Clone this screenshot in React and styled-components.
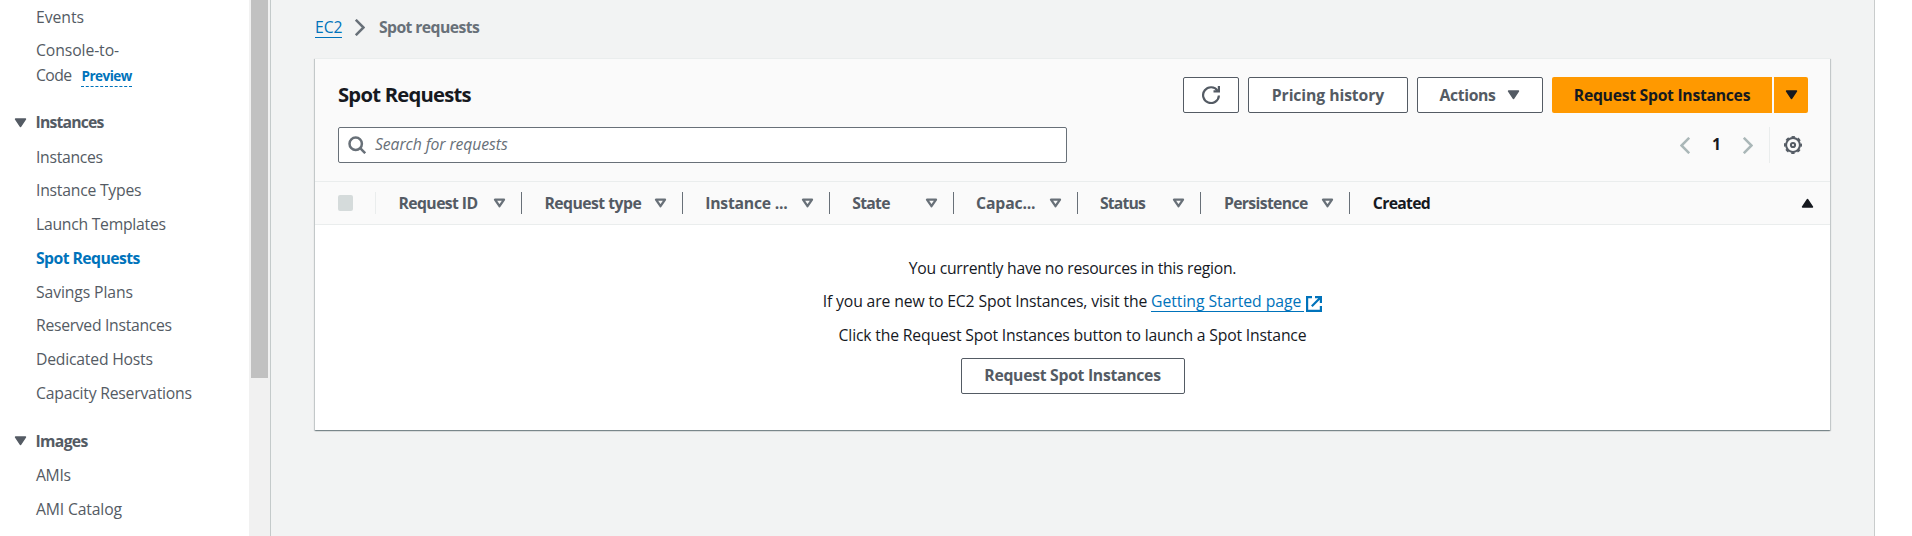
import React from 'react';
import styled, { createGlobalStyle } from 'styled-components';

const Global = createGlobalStyle`
  *, *::before, *::after { box-sizing: border-box; }
  html, body { margin: 0; background: #fff; }
  body { font-family: "Open Sans", "Noto Sans", sans-serif; font-size: 15.75px; line-height: 24.75px; color: #16191f; overflow: hidden; }
  svg { display: block; flex: none; }
`;

const Page = styled.div`
  display: flex;
  height: 536px;
  width: 1912px;
  overflow: hidden;
`;

/* ---------- sidebar ---------- */
const Sidebar = styled.aside`
  display: flex;
  width: 270px;
  flex: none;
`;
const Nav = styled.nav`
  width: 249px;
  padding: 4.5px 36px 0 36px;
  color: #545b64;
  overflow: hidden;
`;
const NavList = styled.ul`
  list-style: none;
  margin: 0 0 ${(p) => p.$gap || 0}px;
  padding: 0;
  display: flex;
  flex-direction: column;
  gap: 9px;
`;
const NavItem = styled.li`
  white-space: nowrap;
  letter-spacing: ${(p) => p.$ls || 0}px;
  ${(p) => p.$active && 'color: #0073bb; font-weight: 700;'}
`;
const NavHeading = styled.div`
  display: flex;
  align-items: center;
  gap: 9px;
  margin: 0 0 9.5px -22.5px;
  font-weight: 700;
  letter-spacing: ${(p) => p.$ls}px;
`;
const TightText = styled.span`
  letter-spacing: -0.6px;
`;
const Preview = styled.span`
  display: inline-block;
  margin-left: 10px;
  border-bottom: 1px dashed #0073bb;
  color: #0073bb;
  font-size: 13.5px;
  line-height: 20px;
  font-weight: 700;
  letter-spacing: -0.5px;
`;
const ScrollTrack = styled.div`
  width: 21px;
  padding: 0 2px;
  background: #f1f1f1;
`;
const ScrollThumb = styled.div`
  width: 17px;
  height: 378px;
  background: #c1c1c1;
`;

/* ---------- main ---------- */
const Main = styled.main`
  width: 1605px;
  flex: none;
  border-left: 1px solid #c4caca;
  border-right: 1px solid #c9cccc;
  background: #f2f3f3;
  padding: 15px 44px 0 44px;
`;
const Breadcrumbs = styled.div`
  display: flex;
  align-items: center;
  height: 25px;
  margin-bottom: 18px;
`;
const Crumb = styled.span`
  color: #687078;
  font-weight: 700;
  letter-spacing: -0.59px;
  margin-left: 13.5px;
`;
const Link = styled.a`
  color: #0073bb;
  border-bottom: 1px solid #0073bb;
  line-height: 20px;
  letter-spacing: ${(p) => p.$ls}px;
  margin-right: ${(p) => p.$mr || 0}px;
  padding-right: ${(p) => p.$pr || 0}px;
`;
const Card = styled.section`
  height: 372px;
  background: #fff;
  border-top: 1px solid #eaeded;
  box-shadow: 0 1px 1px 0 rgba(0, 28, 36, 0.3), 1px 1px 1px 0 rgba(0, 28, 36, 0.15),
    -1px 1px 1px 0 rgba(0, 28, 36, 0.15);
`;
const CardHeader = styled.header`
  height: 122px;
  background: #fafafa;
  padding: 18px 22px 0 23px;
  display: flex;
  flex-direction: column;
  gap: 14px;
`;
const HeaderRow = styled.div`
  display: flex;
  align-items: center;
  justify-content: space-between;
  height: 36px;
`;
const Title = styled.h2`
  margin: 0;
  padding-bottom: 2px;
  font-size: 20.25px;
  line-height: 27px;
  font-weight: 700;
  letter-spacing: -0.78px;
`;
const Actions = styled.div`
  display: flex;
  gap: 9px;
`;
const Button = styled.button`
  display: flex;
  align-items: center;
  justify-content: center;
  gap: 12px;
  width: ${(p) => p.$w}px;
  height: 36px;
  padding: 0 0 ${(p) => p.$lift || 0}px;
  border: 1px solid #545b64;
  border-radius: 2px;
  background: #fff;
  color: #545b64;
  font: 700 15.75px/22px "Open Sans", "Noto Sans", sans-serif;
  letter-spacing: ${(p) => p.$ls || 0}px;
  white-space: nowrap;
`;
const SplitButton = styled.div`
  display: flex;
  gap: 2px;
`;
const Primary = styled(Button)`
  border: 0;
  background: #ff9900;
  color: #16191f;
  border-radius: ${(p) => (p.$end ? '0 2px 2px 0' : '2px 0 0 2px')};
`;
const Search = styled.div`
  display: flex;
  align-items: center;
  gap: 9px;
  width: 729px;
  height: 36px;
  padding: 0 0 1px 9px;
  border: 1px solid #687078;
  border-radius: 2px;
  background: #fff;
  color: #687078;
  font-style: italic;
  letter-spacing: -0.08px;
`;
const Pager = styled.div`
  display: flex;
  align-items: center;
  height: 36px;
`;
const PageNumber = styled.span`
  width: 53px;
  text-align: center;
  font-weight: 700;
  padding-bottom: 2px;
`;
const Settings = styled.div`
  display: flex;
  align-items: center;
  height: 36px;
  margin-left: 16px;
  padding: 0 6px 0 14px;
  border-left: 1px solid #eaeded;
`;
const TableHead = styled.div`
  display: flex;
  align-items: center;
  height: 44px;
  background: #fafafa;
  border-top: 1px solid #eaeded;
  border-bottom: 1px solid #eaeded;
`;
const CheckCell = styled.div`
  display: flex;
  align-items: center;
  width: 61px;
  height: 22px;
  padding-left: 23px;
  border-right: 1px solid #eaeded;
`;
const Checkbox = styled.span`
  width: 15px;
  height: 16px;
  border-radius: 2px;
  background: #d5dbdb;
`;
const HeadCell = styled.div`
  display: flex;
  align-items: center;
  justify-content: space-between;
  width: ${(p) => p.$w}px;
  height: 22px;
  padding: 0 15px 0 22.5px;
  border-right: 1px solid ${(p) => (p.$last ? 'transparent' : '#687078')};
  color: ${(p) => (p.$last ? '#16191f' : '#545b64')};
  font-weight: 700;
  letter-spacing: ${(p) => p.$ls}px;
  white-space: nowrap;
`;
const Empty = styled.div`
  display: flex;
  flex-direction: column;
  align-items: center;
  padding-top: 30.5px;
`;
const Line = styled.p`
  display: flex;
  align-items: baseline;
  height: 24.75px;
  margin: 0 0 ${(p) => p.$gap || 9}px;
  letter-spacing: ${(p) => p.$ls}px;
  white-space: pre;
`;
const ExternalSvg = styled.svg`
  align-self: center;
  margin-top: 4px;
`;

const Caret = ({ up, color = '#545b64' }) => (
  <svg width="13" height="10" viewBox="0 0 13 10">
    <path d={up ? 'M1.5 9h10L6.5 1.5z' : 'M1.5 1h10L6.5 8.5z'} fill={color} stroke={color} strokeWidth="1.4" strokeLinejoin="round" />
  </svg>
);
const SortIcon = () => (
  <svg width="13" height="10" viewBox="0 0 13 10">
    <path d="M2 1.6h9L6.5 8.2z" fill="none" stroke="#687078" strokeWidth="2.3" strokeLinejoin="round" />
  </svg>
);
const Chevron = ({ left, color }) => (
  <svg width="10" height="17" viewBox="0 0 10 17">
    <path d={left ? 'M9.2 .8L1.5 8.5l7.7 7.7' : 'M.8 .8l7.7 7.7-7.7 7.7'} fill="none" stroke={color} strokeWidth="2.5" />
  </svg>
);
const Refresh = () => (
  <svg width="18" height="18" viewBox="0 0 18 18" fill="none" stroke="#545b64" strokeWidth="2.2">
    <path d="M16.9 9.5A7.9 7.9 0 1 1 15.6 4.8" />
    <path d="M11.5 5.4h5.4V0" />
  </svg>
);
const Magnifier = () => (
  <svg width="18" height="18" viewBox="0 0 18 18" fill="none" stroke="#687078" strokeWidth="2.5">
    <circle cx="7.7" cy="7.7" r="6.2" />
    <path d="M12.2 12.2l5 5" />
  </svg>
);
const Gear = () => (
  <svg width="18" height="18" viewBox="0 0 18 18" fill="none" stroke="#545b64">
    <circle cx="9" cy="9" r="6.9" strokeWidth="2" />
    <circle cx="9" cy="9" r="8.1" strokeWidth="1.8" strokeDasharray="3.4 2.962" strokeDashoffset="1.7" />
    <circle cx="9" cy="9" r="2.1" strokeWidth="2" />
  </svg>
);
const External = () => (
  <ExternalSvg width="16" height="16" viewBox="0 0 16 16" fill="none" stroke="#0073bb" strokeWidth="2.2">
    <path d="M6 1.1H1.1v13.8h13.8V10M9 1.1h5.9V7M14.5 1.5L5.8 10.2" />
  </ExternalSvg>
);

const instanceItems = [
  ['Instances', -0.31],
  ['Instance Types', -0.24],
  ['Launch Templates', -0.27],
  ['Spot Requests', -0.57, true],
  ['Savings Plans', -0.12],
  ['Reserved Instances', -0.31],
  ['Dedicated Hosts', -0.22],
  ['Capacity Reservations', -0.22],
];
const columns = [
  ['Request ID', 146, -0.59],
  ['Request type', 161, -0.53],
  ['Instance ...', 147, -0.23],
  ['State', 124, -0.72],
  ['Capac...', 124, -0.16],
  ['Status', 124, -0.84],
  ['Persistence', 149, -0.64],
];

export default function App() {
  return (
    <Page>
      <Global />
      <Sidebar>
        <Nav>
          <NavList $gap={22.5}>
            <NavItem $ls={-0.05}>Events</NavItem>
            <NavItem $ls={-0.1}>
              Console-to-
              <br />
              <TightText>Code</TightText>
              <Preview>Preview</Preview>
            </NavItem>
          </NavList>
          <NavHeading $ls={-0.81}>
            <Caret />
            Instances
          </NavHeading>
          <NavList $gap={23}>
            {instanceItems.map(([label, ls, active]) => (
              <NavItem key={label} $ls={ls} $active={active}>
                {label}
              </NavItem>
            ))}
          </NavList>
          <NavHeading $ls={-0.68}>
            <Caret />
            Images
          </NavHeading>
          <NavList>
            <NavItem $ls={-0.34}>AMIs</NavItem>
            <NavItem $ls={-0.16}>AMI Catalog</NavItem>
          </NavList>
        </Nav>
        <ScrollTrack>
          <ScrollThumb />
        </ScrollTrack>
      </Sidebar>
      <Main>
        <Breadcrumbs>
          <Link $ls={-0.09} $mr={13}>EC2</Link>
          <Chevron color="#687078" />
          <Crumb>Spot requests</Crumb>
        </Breadcrumbs>
        <Card>
          <CardHeader>
            <HeaderRow>
              <Title>Spot Requests</Title>
              <Actions>
                <Button $w={56} aria-label="Refresh">
                  <Refresh />
                </Button>
                <Button $w={160} $ls={-0.09}>Pricing history</Button>
                <Button $w={126} $ls={-0.37}>
                  Actions
                  <Caret />
                </Button>
                <SplitButton>
                  <Primary $w={220} $ls={-0.29}>Request Spot Instances</Primary>
                  <Primary $w={34} $end aria-label="More">
                    <Caret color="#16191f" />
                  </Primary>
                </SplitButton>
              </Actions>
            </HeaderRow>
            <HeaderRow>
              <Search>
                <Magnifier />
                Search for requests
              </Search>
              <Pager>
                <Chevron left color="#aab7b8" />
                <PageNumber>1</PageNumber>
                <Chevron color="#aab7b8" />
                <Settings>
                  <Gear />
                </Settings>
              </Pager>
            </HeaderRow>
          </CardHeader>
          <TableHead>
            <CheckCell>
              <Checkbox />
            </CheckCell>
            {columns.map(([label, w, ls]) => (
              <HeadCell key={label} $w={w} $ls={ls}>
                {label}
                <SortIcon />
              </HeadCell>
            ))}
            <HeadCell $w={480} $ls={-0.69} $last>
              Created
              <Caret up color="#16191f" />
            </HeadCell>
          </TableHead>
          <Empty>
            <Line $ls={-0.28}>You currently have no resources in this region.</Line>
            <Line $ls={-0.14}>
              {'If you are new to EC2 Spot Instances, visit the '}
              <Link $ls={-0.05} $pr={3} $mr={2}>Getting Started page</Link>
              <External />
            </Line>
            <Line $ls={-0.18} $gap={10}>Click the Request Spot Instances button to launch a Spot Instance</Line>
            <Button $w={224} $lift={2} $ls={-0.29}>Request Spot Instances</Button>
          </Empty>
        </Card>
      </Main>
    </Page>
  );
}
